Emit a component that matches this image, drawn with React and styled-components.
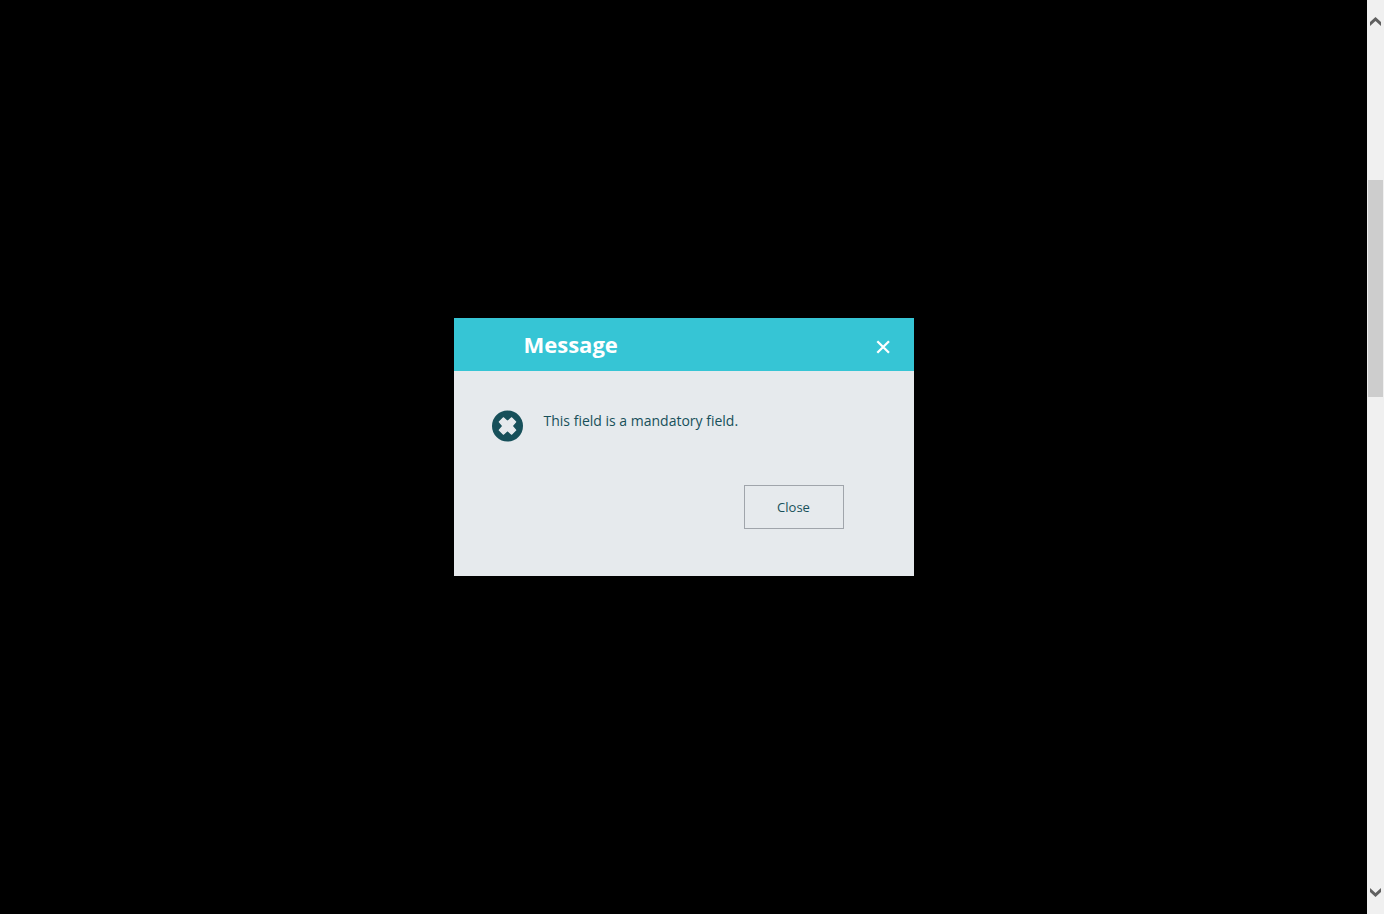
import React from "react";
import styled, { createGlobalStyle } from "styled-components";

const GlobalStyle = createGlobalStyle`
  *, *::before, *::after { box-sizing: border-box; }
  body {
    margin: 0;
    background: #000;
    color: #17505a;
    font-family: "Open Sans", "Liberation Sans", sans-serif;
  }
`;

const Page = styled.div`
  display: flex;
  height: 100vh;
  overflow: hidden;
`;

const Backdrop = styled.main`
  flex: 1;
  display: flex;
  align-items: center;
  justify-content: center;
  padding-bottom: 20px;
  background: #000;
`;

const Dialog = styled.section`
  width: 460px;
  max-width: 100%;
  background: #e6eaed;
`;

const DialogHeader = styled.header`
  display: flex;
  align-items: center;
  justify-content: space-between;
  padding: 11px 24px 12px 70px;
  background: #36c5d5;
  color: #fff;
`;

const DialogTitle = styled.h1`
  margin: 0;
  font-size: 22px;
  line-height: 30px;
  font-weight: 700;
`;

const IconButton = styled.button`
  display: flex;
  align-items: flex-end;
  height: 20px;
  padding: 0;
  border: 0;
  background: transparent;
  color: inherit;
  cursor: pointer;
`;

const DialogBody = styled.div`
  display: flex;
  gap: 21px;
  padding: 40px 38px 0;
`;

const StatusIcon = styled.svg`
  flex: none;
  overflow: visible;
`;

const Message = styled.p`
  margin: 0;
  font-size: 14px;
  line-height: 20px;
`;

const DialogActions = styled.footer`
  display: flex;
  justify-content: flex-end;
  padding: 43px 70px 47px;
`;

const CloseButton = styled.button`
  width: 100px;
  height: 44px;
  padding: 0;
  border: 1px solid #a0a5ab;
  background: transparent;
  color: inherit;
  font-family: inherit;
  font-size: 13px;
  line-height: 18px;
  cursor: pointer;
`;

const Scrollbar = styled.aside`
  display: flex;
  flex-direction: column;
  width: 17px;
  padding: 0 1px;
  background: #f0f0f0;
`;

const ScrollButton = styled.button`
  display: flex;
  align-items: center;
  justify-content: center;
  height: 43px;
  padding: 0;
  border: 0;
  background: transparent;
  color: #606060;
`;

const Track = styled.div`
  flex: 1;
  display: flex;
  flex-direction: column;
`;

const TrackPart = styled.div`
  flex: ${({ $share }) => $share} 0 0;
  background: ${({ $thumb }) => ($thumb ? "#cdcdcd" : "transparent")};
`;

const ErrorIcon = () => (
  <StatusIcon width="31" height="31" viewBox="0 0.5 31 31" aria-hidden="true">
    <circle cx="15.5" cy="15.5" r="15.5" fill="#17505a" />
    <path
      d="M11.3 7.3L15.5 11L19.7 7.3L23.7 11.3L20.1 15.5L23.7 19.7L19.7 23.7L15.5 20L11.3 23.7L7.3 19.7L10.9 15.5L7.3 11.3Z"
      fill="#e6eaed"
      stroke="#e6eaed"
      strokeWidth="1.2"
      strokeLinejoin="round"
    />
  </StatusIcon>
);

const CrossIcon = () => (
  <svg width="14" height="14" viewBox="0 0 14 14" aria-hidden="true">
    <path d="M1.3 1.3L13 12.7M13 1.3L1.3 12.7" fill="none" stroke="currentColor" strokeWidth="2.3" />
  </svg>
);

const Chevron = ({ down }) => (
  <svg width="11" height="9" viewBox="0 0 11 9" aria-hidden="true">
    <path
      d={down ? "M0 0L5.5 5L11 0V4L5.5 9L0 4Z" : "M0 9L5.5 4L11 9V5L5.5 0L0 5Z"}
      fill="currentColor"
    />
  </svg>
);

export default function App() {
  return (
    <Page>
      <GlobalStyle />
      <Backdrop>
        <Dialog role="dialog" aria-modal="true" aria-labelledby="dialog-title">
          <DialogHeader>
            <DialogTitle id="dialog-title">Message</DialogTitle>
            <IconButton type="button" aria-label="Close dialog">
              <CrossIcon />
            </IconButton>
          </DialogHeader>
          <DialogBody>
            <ErrorIcon />
            <Message>This field is a mandatory field.</Message>
          </DialogBody>
          <DialogActions>
            <CloseButton type="button">Close</CloseButton>
          </DialogActions>
        </Dialog>
      </Backdrop>
      <Scrollbar aria-label="Page scroll">
        <ScrollButton type="button" aria-label="Scroll up">
          <Chevron />
        </ScrollButton>
        <Track>
          <TrackPart $share={137} />
          <TrackPart $share={217} $thumb />
          <TrackPart $share={474} />
        </Track>
        <ScrollButton type="button" aria-label="Scroll down">
          <Chevron down />
        </ScrollButton>
      </Scrollbar>
    </Page>
  );
}
